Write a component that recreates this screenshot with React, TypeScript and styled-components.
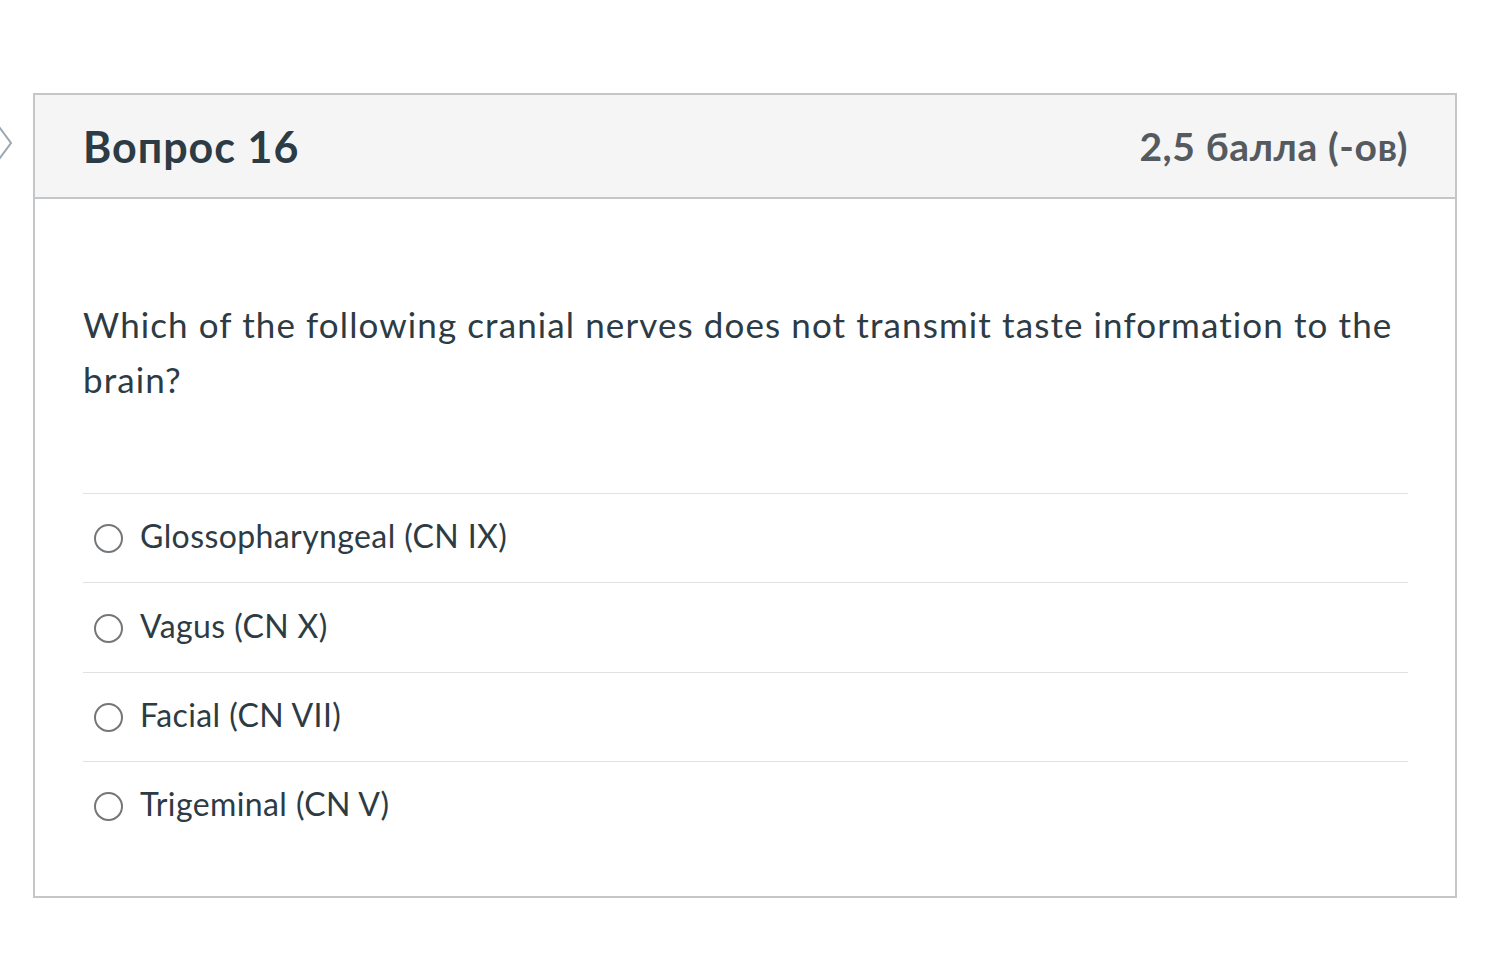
import styled, { createGlobalStyle } from "styled-components";

const GlobalStyle = createGlobalStyle`
  html, body {
    margin: 0;
    padding: 0;
    background: #fff;
  }
  body {
    font-family: Lato, "Liberation Sans", sans-serif;
    color: #2d3b45;
  }
`;

const Page = styled.div`
  display: flex;
  padding-top: 93px;
  width: 1500px;
  height: 966px;
  box-sizing: border-box;
`;

const Gutter = styled.div`
  width: 33px;
  flex-shrink: 0;
  padding-top: 30px;
  box-sizing: border-box;
`;

const Card = styled.div`
  width: 1424px;
  height: 805px;
  box-sizing: border-box;
  border: 2px solid #c4c7ca;
  display: flex;
  flex-direction: column;
`;

const Header = styled.div`
  height: 104px;
  box-sizing: border-box;
  background: #f5f5f5;
  border-bottom: 2px solid #c4c7ca;
  display: flex;
  align-items: center;
  justify-content: space-between;
  padding: 0 47px 0 48px;
`;

const QuestionTitle = styled.h2`
  margin: 0;
  font-size: 43px;
  letter-spacing: 1px;
  font-weight: 700;
  color: #2d3b45;
`;

const Points = styled.div`
  font-size: 39px;
  letter-spacing: 0.6px;
  font-weight: 700;
  color: #555a5e;
`;

const Body = styled.div`
  padding: 98px 47px 0 48px;
`;

const QuestionText = styled.p`
  margin: 0 0 86px;
  font-size: 35px;
  letter-spacing: 1.1px;
  line-height: 55px;
  color: #2d3b45;
`;

const AnswerList = styled.div`
  display: flex;
  flex-direction: column;
`;

const AnswerRow = styled.label`
  display: flex;
  align-items: center;
  height: 89.4px;
  box-sizing: border-box;
  border-top: 1px solid #dfe2e4;
  padding: 0 0 5px 11px;
  gap: 17px;
  font-size: 32px;
  letter-spacing: 0.4px;
  color: #2d3b45;
`;

const Radio = styled.span`
  width: 29px;
  height: 29px;
  border-radius: 50%;
  border: 2px solid #73777a;
  box-sizing: border-box;
  flex-shrink: 0;
  margin-top: 6px;
`;

const answers = [
  "Glossopharyngeal (CN IX)",
  "Vagus (CN X)",
  "Facial (CN VII)",
  "Trigeminal (CN V)",
];

export default function App() {
  return (
    <>
      <GlobalStyle />
      <Page>
        <Gutter>
          <svg width="14" height="42" viewBox="0 0 14 42">
            <polyline
              points="-3,1 11,20 -3,39"
              fill="none"
              stroke="#9aa6b0"
              strokeWidth="2"
            />
          </svg>
        </Gutter>
        <Card>
          <Header>
            <QuestionTitle>Вопрос 16</QuestionTitle>
            <Points>2,5 балла (-ов)</Points>
          </Header>
          <Body>
            <QuestionText>
              Which of the following cranial nerves does not transmit taste
              information to the brain?
            </QuestionText>
            <AnswerList>
              {answers.map((a) => (
                <AnswerRow key={a}>
                  <Radio />
                  {a}
                </AnswerRow>
              ))}
            </AnswerList>
          </Body>
        </Card>
      </Page>
    </>
  );
}
